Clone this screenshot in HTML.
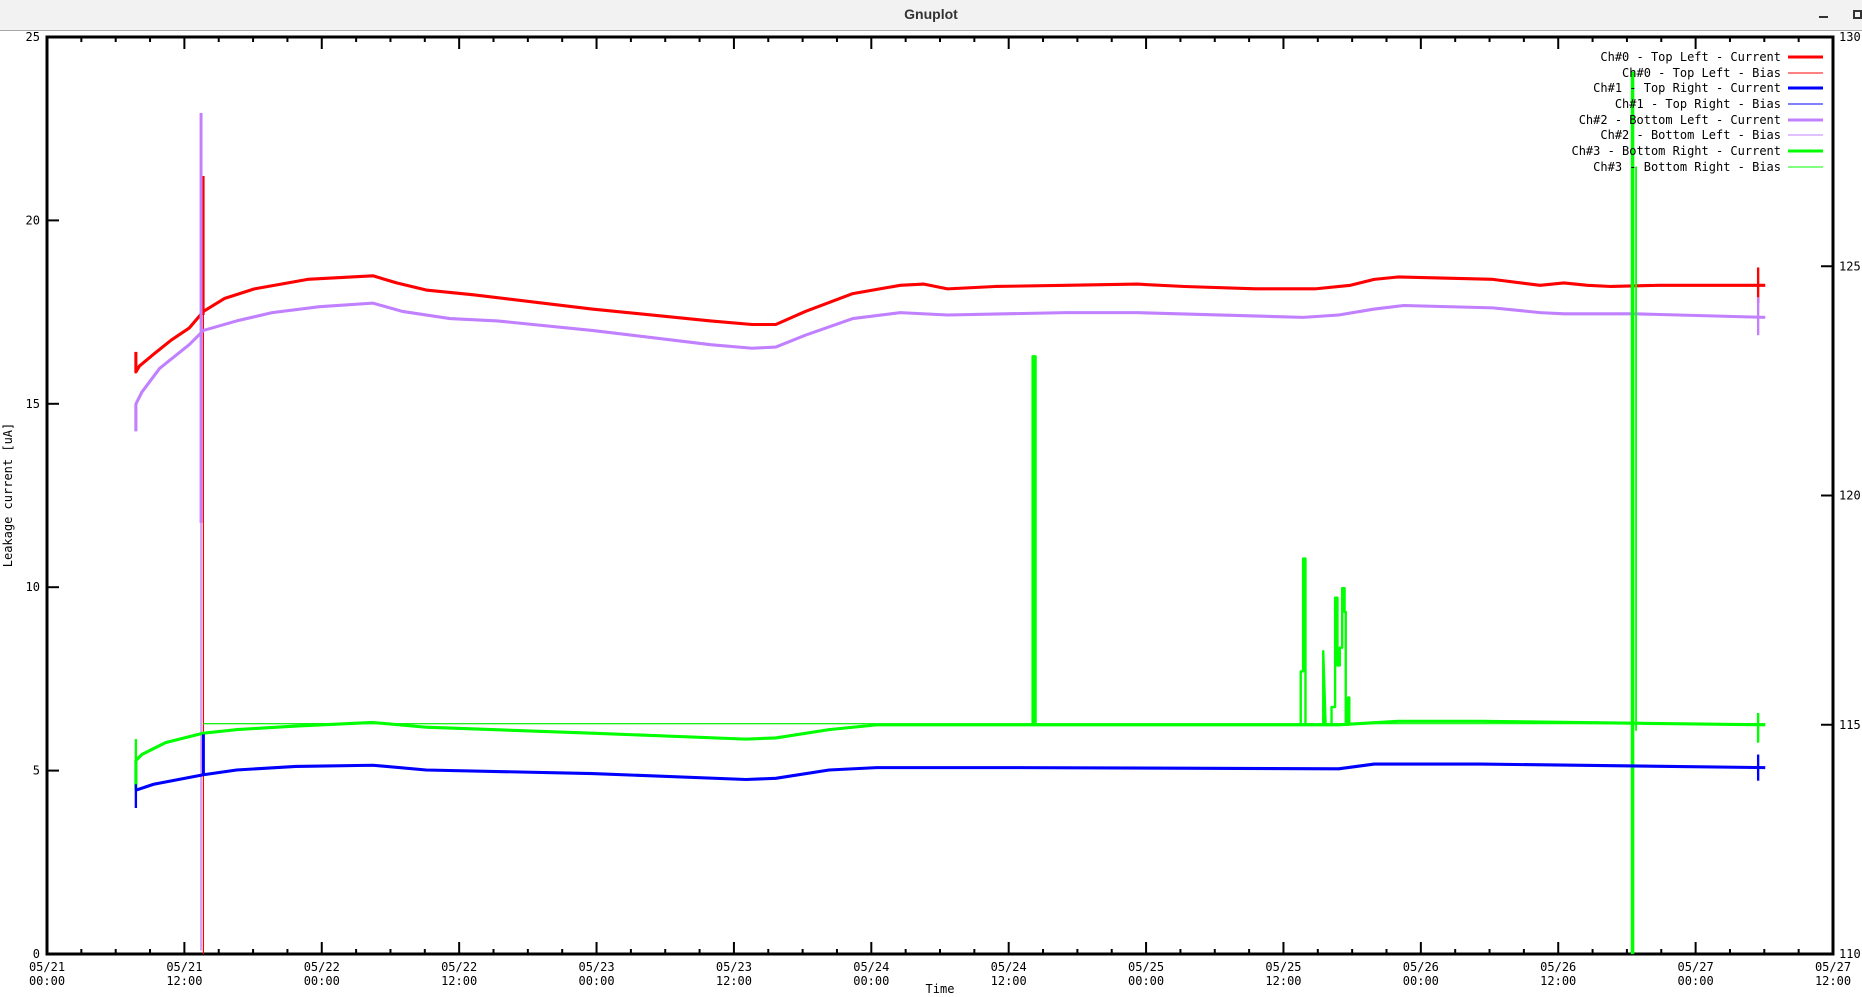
<!DOCTYPE html>
<html><head><meta charset="utf-8"><style>
html,body{margin:0;padding:0;width:1862px;height:997px;overflow:hidden;background:#fff;}
.bar{position:absolute;left:0;top:0;width:1862px;height:30px;background:#f2f2f2;border-bottom:1px solid #a8a8a8;}
.bar .t{position:absolute;left:0;width:100%;top:6px;text-align:center;font:bold 14px "Liberation Sans",sans-serif;color:#333;}
svg{position:absolute;left:0;top:0;}
text{font-family:"DejaVu Sans Mono","Liberation Mono",monospace;font-size:12px;fill:#000;}
</style></head><body>
<div class="bar"><div class="t">Gnuplot</div>
<div style="position:absolute;left:1819px;top:16px;width:9px;height:2px;background:#333"></div>
<div style="position:absolute;left:1853px;top:10px;width:5px;height:5px;border:2px solid #333"></div>
</div>
<svg width="1862" height="997" viewBox="0 0 1862 997">
<g stroke="#000" stroke-width="3" fill="none">
<rect x="47" y="37" width="1786" height="917"/>
</g>
<g id="ticks" stroke="#000" stroke-width="2"></g>
<g transform="translate(47,37) scale(1.185,1.188) translate(-40,-31)" fill="none" stroke-linejoin="round">
<polyline stroke="#ff0000" stroke-width="1" points="172,803 172,200"/>
<polyline stroke="#555" stroke-width="0.8" points="172,609 730,609"/>
<polyline stroke="#c080ff" stroke-width="1.2" points="170,95 170,800"/>
<polyline stroke="#ff0000" stroke-width="2.6" points="115,296 115,313 118,308 130,298 145,286 160,276 172,262 190,251 215,243 260,235 315,232 335,238 360,244 400,248 500,260 600,270 635,273 655,273 680,262 720,247 760,240 780,239 800,243 840,241 900,240 960,239 1000,241 1060,243 1110,243 1140,240 1160,235 1180,233 1260,235 1300,240 1320,238 1340,240 1360,241 1400,240 1490,240"/>
<polyline stroke="#ff0000" stroke-width="2" points="172,148 172,265"/>
<polyline stroke="#ff0000" stroke-width="2" points="1484,225 1484,255"/>
<polyline stroke="#c080ff" stroke-width="2.6" points="115,363 115,340 120,330 135,310 160,290 172,278 200,270 230,263 270,258 315,255 340,262 380,268 420,270 500,278 600,290 635,293 655,292 680,282 720,268 760,263 800,265 900,263 960,263 1100,267 1130,265 1160,260 1185,257 1260,259 1300,263 1320,264 1380,264 1490,267"/>
<polyline stroke="#c080ff" stroke-width="2.5" points="170,95 170,440"/>
<polyline stroke="#c080ff" stroke-width="2" points="1484,250 1484,282"/>
<polyline stroke="#00ff00" stroke-width="1" points="172,609 1490,609"/>
<polyline stroke="#00ff00" stroke-width="2.6" points="115,665 115,640 120,635 140,625 172,617 200,614 250,611 315,608 360,612 500,617 630,622 655,621 700,614 740,610 860,610 1130,610 1180,607 1250,607 1490,610"/>
<polyline stroke="#00ff00" stroke-width="2" points="115,622 115,665"/>
<polyline stroke="#00ff00" stroke-width="2.5" points="872,610 872,300 874,300 874,610"/>
<polyline stroke="#00ff00" stroke-width="2" points="1098,610 1098,565 1100,565 1100,470 1102,470 1102,610"/>
<polyline stroke="#00ff00" stroke-width="2" points="1117,610 1117,548 1119,610 1124,610 1124,595 1127,595 1127,503 1129,503 1129,560 1131,560 1131,545 1133,545 1133,495 1135,495 1135,515 1136,515 1136,610 1138,610 1138,587 1139,587 1139,610"/>
<polyline stroke="#00ff00" stroke-width="3" points="1378,60 1378,803"/>
<polyline stroke="#00ff00" stroke-width="1.5" points="1381,140 1381,615"/>
<polyline stroke="#00ff00" stroke-width="2" points="1484,600 1484,625"/>
<polyline stroke="#0000ff" stroke-width="2.6" points="115,665 130,660 172,652 200,648 250,645 315,644 360,648 500,651 630,656 655,655 700,648 740,646 860,646 1130,647 1160,643 1250,643 1490,646"/>
<polyline stroke="#0000ff" stroke-width="2" points="115,660 115,680"/>
<polyline stroke="#0000ff" stroke-width="2.5" points="172,618 172,652"/>
<polyline stroke="#0000ff" stroke-width="2" points="1484,635 1484,657"/>
</g>
<g text-anchor="end">
<text x="1781" y="61">Ch#0 - Top Left - Current</text>
<text x="1781" y="77">Ch#0 - Top Left - Bias</text>
<text x="1781" y="92">Ch#1 - Top Right - Current</text>
<text x="1781" y="108">Ch#1 - Top Right - Bias</text>
<text x="1781" y="124">Ch#2 - Bottom Left - Current</text>
<text x="1781" y="139">Ch#2 - Bottom Left - Bias</text>
<text x="1781" y="155">Ch#3 - Bottom Right - Current</text>
<text x="1781" y="171">Ch#3 - Bottom Right - Bias</text>
</g>
<g>
<line x1="1788" x2="1823" y1="57" y2="57" stroke="#f00" stroke-width="3"/>
<line x1="1788" x2="1823" y1="73" y2="73" stroke="#f00" stroke-width="1"/>
<line x1="1788" x2="1823" y1="88" y2="88" stroke="#00f" stroke-width="3"/>
<line x1="1788" x2="1823" y1="104" y2="104" stroke="#00f" stroke-width="1"/>
<line x1="1788" x2="1823" y1="120" y2="120" stroke="#c080ff" stroke-width="3"/>
<line x1="1788" x2="1823" y1="135" y2="135" stroke="#c080ff" stroke-width="1"/>
<line x1="1788" x2="1823" y1="151" y2="151" stroke="#0f0" stroke-width="3"/>
<line x1="1788" x2="1823" y1="167" y2="167" stroke="#0f0" stroke-width="1"/>
</g>
<g id="labels"></g>
<text x="0" y="0" transform="translate(12,495) rotate(-90)" text-anchor="middle" font-size="11">Leakage current [uA]</text>
<text x="940" y="993" text-anchor="middle" font-size="11">Time</text>
</svg>
<script>
(function(){
var ns="http://www.w3.org/2000/svg",t=document.getElementById("ticks"),L=document.getElementById("labels");
function ln(x1,y1,x2,y2){var e=document.createElementNS(ns,"line");e.setAttribute("x1",x1);e.setAttribute("y1",y1);e.setAttribute("x2",x2);e.setAttribute("y2",y2);t.appendChild(e);}
function tx(x,y,s,a){var e=document.createElementNS(ns,"text");e.setAttribute("x",x);e.setAttribute("y",y);e.setAttribute("text-anchor",a||"middle");e.textContent=s;L.appendChild(e);}
var step=1786/52;
var days=["05/21","05/21","05/22","05/22","05/23","05/23","05/24","05/24","05/25","05/25","05/26","05/26","05/27","05/27"];
for(var i=0;i<=52;i++){var x=47+i*step;var maj=i%4==0;var l=maj?12:5;ln(x,954,x,954-l);ln(x,37,x,37+l);
 if(maj){var k=i/4;tx(x,971,days[k]);tx(x,985,k%2?"12:00":"00:00");}}
for(var v=0;v<=25;v+=5){var y=954-v*917/25;if(v>0&&v<25){ln(47,y,59,y);}tx(40,y+4,String(v),"end");}
for(var r=110;r<=130;r+=5){var y=954-(r-110)*917/20;if(r>110&&r<130){ln(1833,y,1821,y);}tx(1839,y+4,String(r),"start");}
})();
</script>
</body></html>
